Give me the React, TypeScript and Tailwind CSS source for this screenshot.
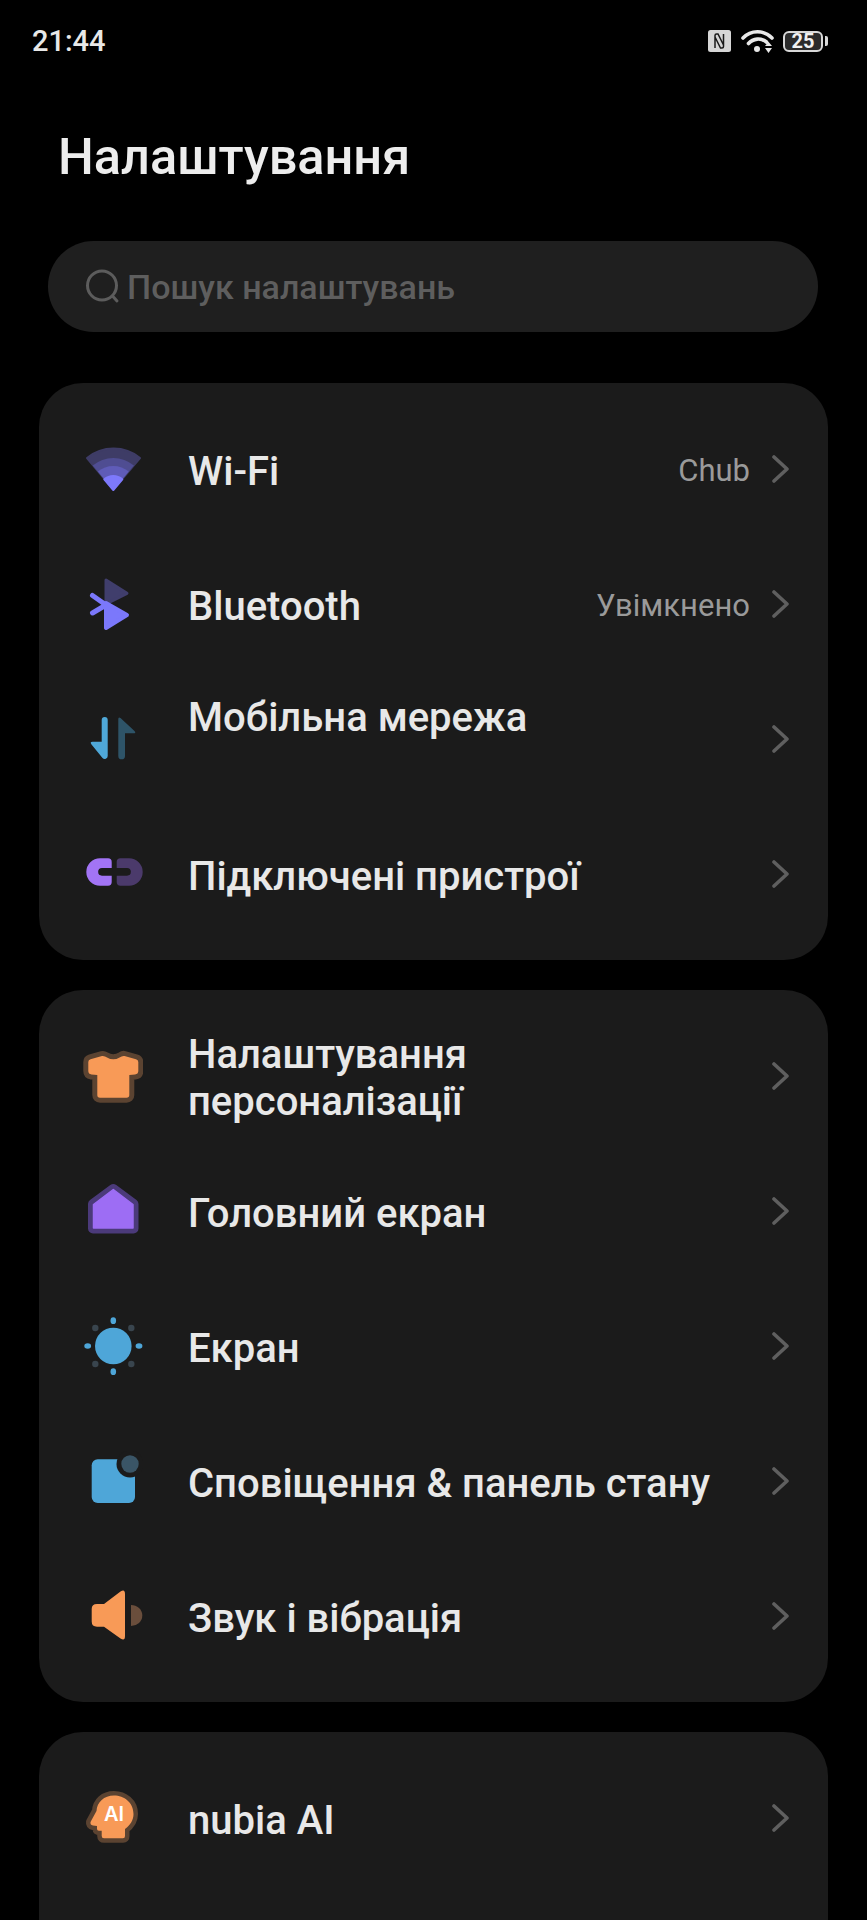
import React from "react";

const Box = ({ children }: { children: React.ReactNode }) => (
  <svg width="60" height="60" viewBox="0 0 60 60" className="shrink-0">
    {children}
  </svg>
);

const Wifi = () => (
  <Box>
    <path d="M4 19 A42 42 0 0 1 57 19 L30.3 50.5 Z" fill="#3e3c66" stroke="#3e3c66" strokeWidth="2" strokeLinejoin="round" />
    <path d="M9.7 26.5 A32 32 0 0 1 50.9 26.5 L30.3 51 Z" fill="#4f4d92" />
    <path d="M14.9 32.6 A24 24 0 0 1 45.7 32.6 L30.3 51 Z" fill="#5f5cb8" />
    <path d="M21.3 40.3 A14 14 0 0 1 39.3 40.3 L30.3 51 Z" fill="#7d79fb" stroke="#7d79fb" strokeWidth="2" strokeLinejoin="round" />
  </Box>
);

const Bluetooth = () => (
  <Box>
    <path d="M23 6 L44 19.3 L23 30 Z" fill="#403e6c" stroke="#403e6c" strokeWidth="3" strokeLinejoin="round" />
    <path d="M9.5 21.5 L23 31 L9.5 39" fill="none" stroke="#7b78fb" strokeWidth="5" strokeLinecap="round" strokeLinejoin="round" />
    <path d="M23 29 L44 41 L23 54 Z" fill="#7b78fb" stroke="#7b78fb" strokeWidth="4" strokeLinejoin="round" />
  </Box>
);

const Mobile = () => (
  <Box>
    <path d="M18.7 11 A3 3 0 0 1 24.7 11 V47 A3 3 0 0 1 19.5 49 L8.5 35.5 Q6.5 32.7 9.5 32.7 H18.7 Z" fill="#4fa8d8" />
    <path d="M35.3 10 Q35.3 7.5 37.5 9 L51.5 22 Q53.5 24.3 50.5 24.3 H42 V47 A3.3 3.3 0 0 1 35.3 47 Z" fill="#2e5468" />
  </Box>
);

const Link = () => (
  <Box>
    <path d="M17 14.3 H25 Q28.7 14.3 28.7 18 V24 H19 A3.8 3.8 0 0 0 19 31.7 H28.7 V38 Q28.7 41.7 25 41.7 H17 A13.7 13.7 0 0 1 17 14.3 Z" fill="#a274f5" />
    <path d="M46 14.3 H37.5 Q33.7 14.3 33.7 18 V24 H44 A3.8 3.8 0 0 1 44 31.7 H33.7 V38 Q33.7 41.7 37.5 41.7 H46 A13.7 13.7 0 0 0 46 14.3 Z" fill="#4b3a6b" />
  </Box>
);

const shirt =
  "M5.3 16 Q5.3 14 7.5 13.3 L19 10 Q20.5 9.6 22 10.6 Q30.3 16 38.6 10.6 Q40 9.6 41.5 10 L53 13.3 Q55.3 14 55.3 16 V25 Q55.3 28 52 28.5 L46.3 29 V49 Q46.3 51.7 43.5 51.7 H17 Q14.3 51.7 14.3 49 V29 L8.5 28.5 Q5.3 28 5.3 25 Z";
const Shirt = () => (
  <Box>
    <path d={shirt} fill="#5b4331" stroke="#5b4331" strokeWidth="10" strokeLinejoin="round" />
    <path d={shirt} fill="#f89a57" />
  </Box>
);

const Home = () => (
  <Box>
    <path d="M30.3 8 L10 23 V47.5 H50.5 V23 Z" fill="#4b3a7a" stroke="#4b3a7a" strokeWidth="10" strokeLinejoin="round" />
    <path d="M30.3 8.5 L10.5 23.5 V47 H50 V23.5 Z" fill="#9d6df4" stroke="#9d6df4" strokeWidth="1.5" strokeLinejoin="round" />
  </Box>
);

const Sun = () => (
  <Box>
    <circle cx="30.3" cy="30" r="18.3" fill="#4ea6d8" />
    <ellipse cx="30.3" cy="4.7" rx="2.8" ry="3.4" fill="#4ea6d8" />
    <ellipse cx="30.3" cy="55.7" rx="2.8" ry="3.4" fill="#4ea6d8" />
    <ellipse cx="4.7" cy="30" rx="3.4" ry="2.8" fill="#4ea6d8" />
    <ellipse cx="56" cy="30" rx="3.4" ry="2.8" fill="#4ea6d8" />
    <circle cx="12.3" cy="12" r="3.2" fill="#39454e" />
    <circle cx="48.3" cy="12" r="3.2" fill="#39454e" />
    <circle cx="12.3" cy="48" r="3.2" fill="#39454e" />
    <circle cx="48.3" cy="48" r="3.2" fill="#39454e" />
  </Box>
);

const Notify = () => (
  <Box>
    <rect x="8.7" y="8.3" width="43.3" height="43.7" rx="6" fill="#4ea6d8" />
    <circle cx="47" cy="13" r="13.5" fill="#1b1b1b" />
    <circle cx="47" cy="13" r="8.7" fill="#3a5566" />
  </Box>
);

const Speaker = () => (
  <Box>
    <path d="M14 18 H21 L37.5 5.5 Q42 2.5 42 8 V50 Q42 55.5 37.5 52.5 L21 40.7 H14 Q8.7 40.7 8.7 35.5 V23 Q8.7 18 14 18 Z" fill="#f89a57" />
    <path d="M48 19 A11.3 10.5 0 0 1 48 40 Z" fill="#6a4e3c" />
  </Box>
);

const head =
  "M18.7 48 Q18.7 50.3 21 50.3 H40 Q42 50.3 42 48 V41 C47.5 37 50.5 32 50.5 26 C50.5 14.5 41 7.5 31 7.5 C21 7.5 14 14 13.5 23 L7.5 34 Q7 37 10 37.5 L14 38 V41 Q14 42.7 16 42.7 H18.7 Z";
const Head = () => (
  <Box>
    <path d={head} fill="#5b4331" stroke="#5b4331" strokeWidth="9" strokeLinejoin="round" />
    <path d={head} fill="#f89a57" />
    <text x="31" y="33" textAnchor="middle" fontSize="20" fontWeight="600" fill="#fff" fontFamily="Inter, sans-serif">AI</text>
  </Box>
);

const Chevron = () => (
  <svg width="17" height="28" viewBox="0 0 17 28" className="shrink-0">
    <path d="M2 2 L15 14 L2 26" fill="none" stroke="#5f5f5f" strokeWidth="3.6" strokeLinecap="round" strokeLinejoin="round" />
  </svg>
);

const Row = ({ icon, label, value }: { icon: React.ReactNode; label: React.ReactNode; value?: string }) => (
  <div className="flex h-[135px] items-center pl-[44px] pr-[39px]">
    {icon}
    <div className="ml-[45px] mt-[4px] flex-1 text-[40px] font-medium leading-[47px] text-[#e8e8e8]">{label}</div>
    {value && <span className="mt-[4px] text-[31px] leading-[42px] text-[#9a9a9a]">{value}</span>}
    <div className="ml-[22px] flex shrink-0">
      <Chevron />
    </div>
  </div>
);

const Card = ({ children, className }: { children: React.ReactNode; className?: string }) => (
  <div className={`mx-[39px] rounded-[44px] bg-[#1b1b1b] py-[18.5px] ${className ?? ""}`}>{children}</div>
);

export default function App() {
  return (
    <div className="h-[1920px] w-[867px] overflow-hidden bg-black font-['Roboto',sans-serif]">
      <div className="flex h-[82px] items-center justify-between pl-[32px] pr-[39px]">
        <span className="mt-[1px] text-[29px] font-medium text-[#e8e8e8]">21:44</span>
        <div className="flex items-center">
          <svg width="23" height="22" viewBox="0 0 23 22" className="mr-[10px]">
            <rect width="23" height="22" rx="2.5" fill="#d6d6d6" />
            <path d="M7 18 V5.5 Q7 4 8.5 4 H10 L15.5 15 M15.5 4 V16.5 Q15.5 18 14 18 H12.5 L7 7" fill="none" stroke="#1a1a1a" strokeWidth="1.5" />
          </svg>
          <svg width="34" height="25" viewBox="0 0 34 25" className="mr-[8px]">
            <path d="M2 9 A20 20 0 0 1 31 9" fill="none" stroke="#e8e8e8" strokeWidth="3.6" strokeLinecap="round" />
            <path d="M7.5 14.5 A13 13 0 0 1 25.5 13" fill="none" stroke="#e8e8e8" strokeWidth="3.6" strokeLinecap="round" />
            <circle cx="16" cy="20" r="3" fill="#e8e8e8" />
            <path d="M24 17 L27.5 12.8 L31 17 Z M24 19 H31 L27.5 24 Z" fill="#e8e8e8" />
          </svg>
          <div className="flex h-[21px] w-[40px] items-center justify-center rounded-[6px] border-2 border-[#d8d8d8] bg-[#2b2b2b] text-[20px] font-bold leading-none text-[#f0f0f0]">
            25
          </div>
          <div className="ml-[2px] h-[10px] w-[3px] rounded-r-[2px] bg-[#d8d8d8]" />
        </div>
      </div>
      <h1 className="ml-[58px] mt-[46px] text-[50.5px] font-medium leading-[58px] text-[#ededed]">Налаштування</h1>
      <div className="mb-[51px] ml-[48px] mr-[49px] mt-[55px] flex h-[91px] items-center rounded-full bg-[#1f1f1f] pl-[37px]">
        <svg width="36" height="36" viewBox="0 0 36 36" className="shrink-0">
          <circle cx="17" cy="16.5" r="14.5" fill="none" stroke="#5c5c5c" strokeWidth="3" />
          <path d="M27.5 27 L32 32" stroke="#5c5c5c" strokeWidth="3" strokeLinecap="round" />
        </svg>
        <span className="ml-[6px] mt-[2px] text-[34px] font-medium text-[#5e5e5e]">Пошук налаштувань</span>
      </div>
      <Card>
        <Row icon={<Wifi />} label="Wi-Fi" value="Chub" />
        <Row icon={<Bluetooth />} label="Bluetooth" value="Увімкнено" />
        <Row
          icon={<Mobile />}
          label={
            <>
              Мобільна мережа
              <br />
              &nbsp;
            </>
          }
        />
        <Row icon={<Link />} label="Підключені пристрої" />
      </Card>
      <Card className="mt-[30px]">
        <Row
          icon={<Shirt />}
          label={
            <>
              Налаштування
              <br />
              персоналізації
            </>
          }
        />
        <Row icon={<Home />} label="Головний екран" />
        <Row icon={<Sun />} label="Екран" />
        <Row icon={<Notify />} label="Сповіщення & панель стану" />
        <Row icon={<Speaker />} label="Звук і вібрація" />
      </Card>
      <Card className="mt-[30px] h-[400px]">
        <Row icon={<Head />} label="nubia AI" />
      </Card>
    </div>
  );
}
